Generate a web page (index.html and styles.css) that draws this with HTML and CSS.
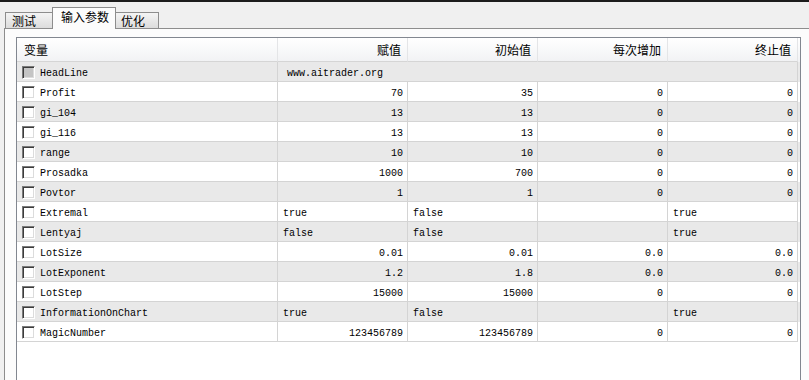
FILE: index.html
```html
<!doctype html>
<html>
    <head>
        <meta charset="utf-8">
        <title>输入参数</title>
        <link rel="stylesheet" href="styles.css">
    </head>
    <body>
        <div class="topline"></div>
        <div class="tabs">
            <div class="tab">测试</div>
            <div class="tab active">输入参数</div>
            <div class="tab last">优化</div>
        </div>
        <div class="panel">
            <div class="list">
                <div class="row head">
                    <div class="cell first">变量</div>
                    <div class="cell num">赋值</div>
                    <div class="cell num">初始值</div>
                    <div class="cell num">每次增加</div>
                    <div class="cell num">终止值</div>
                </div>

                <div class="row gray">
                    <div class="cell first"><span class="check filled"></span>HeadLine</div>
                    <div class="cell span">www.aitrader.org</div>
                </div>
                <div class="row">
                    <div class="cell first"><span class="check"></span>Profit</div>
                    <div class="cell num">70</div>
                    <div class="cell num">35</div>
                    <div class="cell num">0</div>
                    <div class="cell num">0</div>
                </div>
                <div class="row gray">
                    <div class="cell first"><span class="check"></span>gi_104</div>
                    <div class="cell num">13</div>
                    <div class="cell num">13</div>
                    <div class="cell num">0</div>
                    <div class="cell num">0</div>
                </div>
                <div class="row">
                    <div class="cell first"><span class="check"></span>gi_116</div>
                    <div class="cell num">13</div>
                    <div class="cell num">13</div>
                    <div class="cell num">0</div>
                    <div class="cell num">0</div>
                </div>
                <div class="row gray">
                    <div class="cell first"><span class="check"></span>range</div>
                    <div class="cell num">10</div>
                    <div class="cell num">10</div>
                    <div class="cell num">0</div>
                    <div class="cell num">0</div>
                </div>
                <div class="row">
                    <div class="cell first"><span class="check"></span>Prosadka</div>
                    <div class="cell num">1000</div>
                    <div class="cell num">700</div>
                    <div class="cell num">0</div>
                    <div class="cell num">0</div>
                </div>
                <div class="row gray">
                    <div class="cell first"><span class="check"></span>Povtor</div>
                    <div class="cell num">1</div>
                    <div class="cell num">1</div>
                    <div class="cell num">0</div>
                    <div class="cell num">0</div>
                </div>
                <div class="row">
                    <div class="cell first"><span class="check"></span>Extremal</div>
                    <div class="cell">true</div>
                    <div class="cell">false</div>
                    <div class="cell"></div>
                    <div class="cell">true</div>
                </div>
                <div class="row gray">
                    <div class="cell first"><span class="check"></span>Lentyaj</div>
                    <div class="cell">false</div>
                    <div class="cell">false</div>
                    <div class="cell"></div>
                    <div class="cell">true</div>
                </div>
                <div class="row">
                    <div class="cell first"><span class="check"></span>LotSize</div>
                    <div class="cell num">0.01</div>
                    <div class="cell num">0.01</div>
                    <div class="cell num">0.0</div>
                    <div class="cell num">0.0</div>
                </div>
                <div class="row gray">
                    <div class="cell first"><span class="check"></span>LotExponent</div>
                    <div class="cell num">1.2</div>
                    <div class="cell num">1.8</div>
                    <div class="cell num">0.0</div>
                    <div class="cell num">0.0</div>
                </div>
                <div class="row">
                    <div class="cell first"><span class="check"></span>LotStep</div>
                    <div class="cell num">15000</div>
                    <div class="cell num">15000</div>
                    <div class="cell num">0</div>
                    <div class="cell num">0</div>
                </div>
                <div class="row gray">
                    <div class="cell first"><span class="check"></span>InformationOnChart</div>
                    <div class="cell">true</div>
                    <div class="cell">false</div>
                    <div class="cell"></div>
                    <div class="cell">true</div>
                </div>
                <div class="row">
                    <div class="cell first"><span class="check"></span>MagicNumber</div>
                    <div class="cell num">123456789</div>
                    <div class="cell num">123456789</div>
                    <div class="cell num">0</div>
                    <div class="cell num">0</div>
                </div>
            </div>
        </div>
    </body>
</html>
```

FILE: styles.css
```css
* {
    margin: 0;
    padding: 0;
    box-sizing: border-box;
}

body {
    background-color: #f0f0f0;
    font-family: "Liberation Mono", "Noto Sans CJK SC", monospace;
    font-size: 10px;
    color: #000;
    overflow: hidden;
    height: 380px;
}

.topline {
    height: 2px;
    background-color: #1c1c1c;
}

.tabs {
    height: 26px;
    display: flex;
    align-items: flex-end;
    padding-left: 5px;
    position: relative;
    z-index: 1;
}

.tab {
    height: 16px;
    width: 48px;
    border: 1px solid #8d8d8d;
    border-bottom: none;
    background: linear-gradient(#f4f4f4, #dcdcdc);
    font-family: "Noto Sans CJK SC", sans-serif;
    font-size: 12px;
    line-height: 15px;
    padding-left: 6px;
}

.tab.active {
    height: 22px;
    width: 64px;
    margin-left: -1px;
    margin-bottom: -1px;
    background: #fcfcfc;
    line-height: 16px;
    padding-left: 8px;
    padding-top: 1px;
}

.tab.last {
    width: 44px;
    margin-left: -1px;
    padding-left: 5px;
}

.panel {
    margin-left: 4px;
    height: 352px;
    border-top: 1px solid #8d8d8d;
    border-left: 1px solid #8d8d8d;
    background-color: #fcfcfc;
    padding: 8px 0 0 11px;
    overflow: hidden;
}

.list {
    width: 785px;
    height: 343px;
    border: 1px solid #828790;
    border-bottom: none;
    background-color: #fff;
}

.row {
    display: grid;
    grid-template-columns: 261px 130px 130px 130px 130px;
    height: 20px;
}

.row.gray {
    background-color: #e9e9e9;
}

.row.head {
    height: 24px;
    background: linear-gradient(#ffffff, #f1f2f4);
}

.cell {
    border-right: 1px solid #d4d4d4;
    border-bottom: 1px solid #d4d4d4;
    line-height: 17px;
    padding: 3px 5px 0;
    white-space: nowrap;
    overflow: hidden;
}

.cell.num {
    text-align: right;
    padding-right: 4px;
}

.cell.first {
    display: flex;
    align-items: flex-start;
    padding-top: 3px;
    padding-left: 5px;
}

.cell.span {
    grid-column: span 4;
    padding-left: 9px;
}

.head .cell {
    font-family: "Noto Sans CJK SC", sans-serif;
    font-size: 12px;
    line-height: 20px;
    padding-top: 2px;
    border-right-color: #e4e5e7;
    border-bottom-color: #d5d5d5;
}

.head .cell.first {
    padding-top: 2px;
    padding-left: 7px;
}

.head .cell.num {
    padding-right: 6px;
}

.check {
    flex: none;
    width: 13px;
    height: 13px;
    margin-top: 1px;
    margin-right: 5px;
    background-color: #fff;
    border-top: 1px solid #7a7a7a;
    border-left: 1px solid #7a7a7a;
    border-bottom: 1px solid #fff;
    border-right: 1px solid #fff;
    box-shadow: inset 1px 1px 0 #3c3c3c, inset -1px -1px 0 #dcdcdc;
}

.check.filled {
    background-color: #c4c4c4;
}
```
